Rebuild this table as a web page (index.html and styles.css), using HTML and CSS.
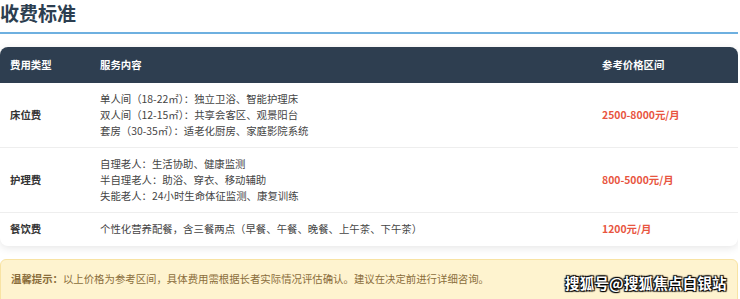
FILE: index.html
```html
<!DOCTYPE html>
<html lang="zh-CN">
<head>
<meta charset="utf-8">
<link rel="stylesheet" href="styles.css">
</head>
<body>
<div class="page">
  <h2 class="title">收费标准</h2>
  <div class="table">
    <div class="row head">
      <div class="c1">费用类型</div>
      <div class="c2">服务内容</div>
      <div class="c3">参考价格区间</div>
    </div>
    <div class="row">
      <div class="c1 label">床位费</div>
      <div class="c2">
        <div>单人间（18-22㎡）：独立卫浴、智能护理床</div>
        <div>双人间（12-15㎡）：共享会客区、观景阳台</div>
        <div>套房（30-35㎡）：适老化厨房、家庭影院系统</div>
      </div>
      <div class="c3 price">2500-8000元/月</div>
    </div>
    <div class="row">
      <div class="c1 label">护理费</div>
      <div class="c2">
        <div>自理老人：生活协助、健康监测</div>
        <div>半自理老人：助浴、穿衣、移动辅助</div>
        <div>失能老人：24小时生命体征监测、康复训练</div>
      </div>
      <div class="c3 price">800-5000元/月</div>
    </div>
    <div class="row last">
      <div class="c1 label">餐饮费</div>
      <div class="c2">个性化营养配餐，含三餐两点（早餐、午餐、晚餐、上午茶、下午茶）</div>
      <div class="c3 price">1200元/月</div>
    </div>
  </div>
  <div class="notice"><b>温馨提示：</b>以上价格为参考区间，具体费用需根据长者实际情况评估确认。建议在决定前进行详细咨询。</div>
  <div class="watermark">搜狐号@搜狐焦点白银站</div>
</div>
</body>
</html>
```
FILE: styles.css
```css
html, body {
  margin: 0;
  padding: 0;
  background: #fff;
}
body {
  font-family: "Noto Sans CJK SC", "Noto Sans", sans-serif;
  color: #444;
}
.page {
  position: relative;
  width: 738px;
  height: 299px;
  overflow: hidden;
}
.title {
  margin: 0;
  width: 740px;
  font-size: 19px;
  line-height: 26px;
  font-weight: 700;
  color: #2c3e50;
  padding: 0 0 6px 0;
  border-bottom: 2px solid #6eb0e0;
}
.table {
  margin-top: 13px;
  border-radius: 8px;
  overflow: hidden;
  background: #fff;
  box-shadow: 0 2px 8px rgba(0,0,0,0.10);
}
.row {
  display: grid;
  grid-template-columns: 90px 502px 1fr;
  align-items: center;
  padding: 8px 10px 8px 10px;
  font-size: 10.4px;
  line-height: 16px;
  border-bottom: 1px solid #eeeeee;
}
.row.last {
  border-bottom: none;
  padding: 8px 10px 9px 10px;
}
.row.head {
  background: #2e3e50;
  color: #fff;
  font-weight: 700;
  padding: 10px 10px;
  border-bottom: none;
}
.label {
  font-weight: 700;
  color: #333;
}
.price {
  font-weight: 700;
  color: #e8553f;
}
.notice {
  margin-top: 13px;
  background: #fef3cf;
  border: 1px solid #f8e3a3;
  border-radius: 6px;
  padding: 11px 10px 20px;
  font-size: 10.4px;
  line-height: 16px;
  color: #8a6d3b;
}
.notice b {
  font-weight: 700;
}
.watermark {
  position: absolute;
  left: 565px;
  top: 274px;
  font-size: 14.5px;
  line-height: 18px;
  font-weight: 700;
  color: #fff;
  letter-spacing: 0.2px;
  text-shadow: 1px 1px 1px #000, -1px -1px 1px #000, 1px -1px 1px #000, -1px 1px 1px #000;
}
```
